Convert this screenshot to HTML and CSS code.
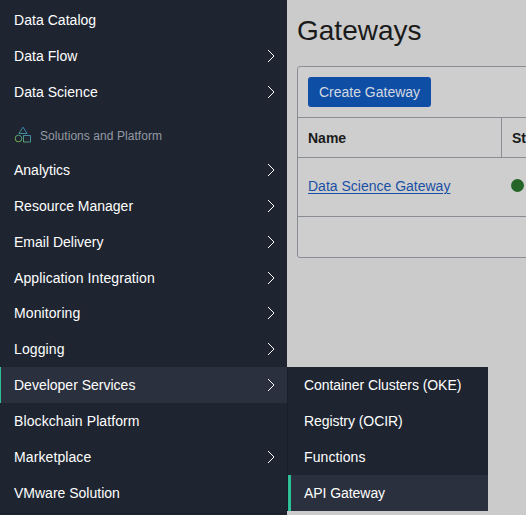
FILE: index.html
```html
<!DOCTYPE html>
<html lang="en">
<head>
<meta charset="utf-8">
<title>Gateways</title>
<link rel="stylesheet" href="styles.css">
</head>
<body>
<svg width="0" height="0" class="defs"><symbol id="chev" viewBox="0 0 8 14"><path d="M1 1l6 6-6 6" fill="none" stroke="#fff" stroke-width="1"/></symbol></svg>
<div class="app">
  <nav class="sidebar">
    <ul class="group first">
      <li>Data Catalog</li>
      <li>Data Flow<svg class="chev"><use href="#chev"/></svg></li>
      <li>Data Science<svg class="chev"><use href="#chev"/></svg></li>
    </ul>
    <div class="section">
      <svg class="shapes" width="18" height="18" viewBox="0 0 18 18">
        <defs><linearGradient id="g" gradientUnits="userSpaceOnUse" x1="2" y1="16" x2="12" y2="3"><stop offset="0" stop-color="#80b83e"/><stop offset=".5" stop-color="#4b938e"/><stop offset="1" stop-color="#3c83b5"/></linearGradient></defs>
        <g fill="none" stroke="url(#g)" stroke-width="1"><path d="M9 1.2L4.9 7.5h8.2z"/><circle cx="4.5" cy="12.5" r="3.3"/><path d="M9.5 9.5h7v6.5h-7z"/></g>
      </svg>
      <span>Solutions and Platform</span>
    </div>
    <ul class="group">
      <li>Analytics<svg class="chev"><use href="#chev"/></svg></li>
      <li>Resource Manager<svg class="chev"><use href="#chev"/></svg></li>
      <li>Email Delivery<svg class="chev"><use href="#chev"/></svg></li>
      <li class="spaced">Application Integration<svg class="chev"><use href="#chev"/></svg></li>
      <li class="spaced">Monitoring<svg class="chev"><use href="#chev"/></svg></li>
      <li class="spaced">Logging<svg class="chev"><use href="#chev"/></svg></li>
      <li class="active">Developer Services<svg class="chev"><use href="#chev"/></svg></li>
      <li class="spaced">Blockchain Platform</li>
      <li class="spaced">Marketplace<svg class="chev"><use href="#chev"/></svg></li>
      <li>VMware Solution</li>
    </ul>
    <div class="end"></div>
  </nav>
  <main>
    <h1>Gateways</h1>
    <section class="panel">
      <div class="toolbar"><button>Create Gateway</button></div>
      <div class="row head"><div class="name">Name</div><div class="state">State</div></div>
      <div class="row body"><div class="name"><a href="#">Data Science Gateway</a></div><div class="state"><i class="dot"></i></div></div>
      <div class="foot"></div>
    </section>
  </main>
  <ul class="submenu">
    <li>Container Clusters (OKE)</li>
    <li>Registry (OCIR)</li>
    <li class="spaced">Functions</li>
    <li>API Gateway</li>
  </ul>
</div>
</body>
</html>
```
FILE: styles.css
```css
* { box-sizing: border-box; }
body { margin: 0; background: #cbcbcb; font: 14px/20px "Liberation Sans", Arial, sans-serif; overflow: hidden; }
ul { list-style: none; margin: 0; padding: 0; }
.defs { position: absolute; }
.app { display: flex; width: 526px; height: 515px; position: relative; overflow: hidden; }
.sidebar { width: 287px; flex: none; background: #1e2531; color: #fff; }
.group li { height: 35.86px; padding: 0 12px 0 14px; display: flex; align-items: center; justify-content: space-between; }
.group li.spaced { letter-spacing: .1px; }
.first { padding-top: 2px; height: 118px; }
.group.first li { height: 36px; letter-spacing: .04px; }
.chev { width: 8px; height: 14px; }
.section { height: 34px; display: flex; align-items: center; gap: 8px; padding: 1px 0 0 14px; color: #949aa2; font-size: 12px; letter-spacing: .06px; }
.shapes { flex: none; position: relative; top: -1px; }
.group li.active { background: #2a303d; box-shadow: inset 1px 0 #2dbf95; }
.end { border-top: 1px solid #191e29; margin-top: 2px; }
main { flex: none; width: 300px; padding: 13px 0 0 10px; color: #1a1a1a; }
h1 { margin: 0 0 18px; font-size: 28px; line-height: 35px; font-weight: 400; }
.panel { height: 192px; border: 1px solid #8a8d94; border-radius: 3px; background: #cecece; }
.toolbar { height: 50px; padding: 10px; }
button { display: block; width: 123px; height: 30px; padding: 0; border: 0; border-radius: 3px; background: #0f4ea5; color: #d3d9e2; font: inherit; }
.row { display: flex; border-top: 1px solid #8a8d94; }
.row > div { display: flex; align-items: center; padding-left: 10px; }
.row > .name { width: 203px; }
.head { height: 40px; font-weight: 700; }
.head .state { border-left: 1px solid #8a8d94; }
.body { height: 59px; }
.body .name { padding-bottom: 2px; }
.row.body .state { padding: 0 0 3px 10px; }
a { color: #1950a5; text-underline-offset: 2px; text-decoration-thickness: 1px; }
.dot { width: 13px; height: 13px; border-radius: 50%; background: #266529; }
.foot { border-top: 1px solid #8a8d94; }
.submenu { position: absolute; left: 287px; top: 367px; width: 201px; background: #1e2531; border-left: 1px solid #191f2a; color: #fff; }
.submenu li { height: 36px; display: flex; align-items: center; padding-left: 16px; letter-spacing: -.06px; }
.submenu li.spaced { letter-spacing: .1px; }
.submenu li:last-child { background: #2a303d; box-shadow: inset 3px 0 #2dbf95; }
```
